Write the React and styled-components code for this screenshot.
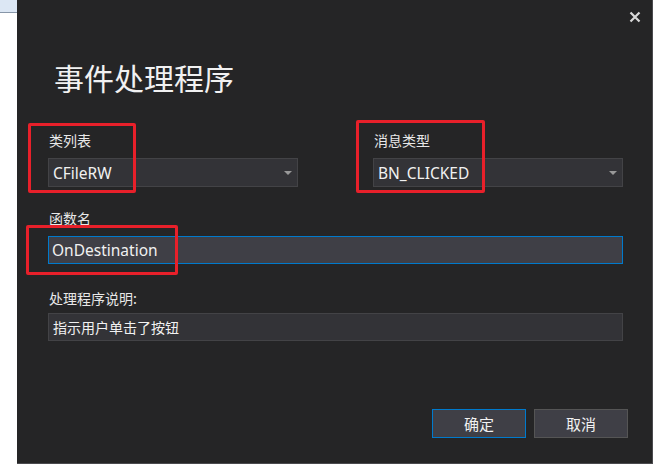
import React from "react";
import styled, { createGlobalStyle } from "styled-components";

const Global = createGlobalStyle`
  html, body { margin: 0; padding: 0; background: #ffffff; }
  body { font-family: "Noto Sans", "Noto Sans CJK SC", sans-serif; }
`;

const Page = styled.div`
  display: flex;
  width: 653px;
  height: 471px;
  background: #ffffff;
  overflow: hidden;
`;

const SideStrip = styled.div`
  width: 17px;
  flex: none;
  display: flex;
  flex-direction: column;
`;

const SideBand = styled.div`
  height: 12px;
  background: #dce7f4;
  border-bottom: 1px solid #8796a8;
`;

const Dialog = styled.div`
  position: relative;
  flex: 1;
  background: #252526;
  border-right: 1px solid #4a4a4e;
  border-bottom: 1px solid #4a4a4e;
  display: flex;
  flex-direction: column;
  padding: 0 29px 25px 31px;
  box-sizing: border-box;
  height: 464px;
  color: #f1f1f1;
  font-family: "Noto Sans", "Noto Sans CJK SC", sans-serif;
`;

const Header = styled.div`
  display: flex;
  justify-content: flex-end;
  height: 34px;
  margin-right: -18px;
  padding-top: 11px;
  box-sizing: border-box;
`;

const CloseButton = styled.button`
  width: 12px;
  height: 12px;
  padding: 0;
  border: none;
  background: transparent;
  display: flex;
  align-items: center;
  justify-content: center;
  svg { display: block; }
`;

const Title = styled.h1`
  margin: 23px 0 0 6px;
  font-family: "Noto Sans CJK SC", sans-serif;
  font-weight: 400;
  font-size: 30px;
  line-height: 40px;
  color: #f1f1f1;
`;

const TwoCols = styled.div`
  display: grid;
  grid-template-columns: 250px 250px;
  justify-content: space-between;
  margin-top: 33px;
`;

const Field = styled.div`
  display: flex;
  flex-direction: column;
  margin-top: ${(p) => p.$top || 0}px;
`;

const Label = styled.label`
  font-family: "Noto Sans CJK SC", sans-serif;
  font-size: 14px;
  line-height: 20px;
  color: #e8e8e8;
  margin-bottom: ${(p) => p.$gap || 8}px;
  margin-left: 1px;
`;

const Combo = styled.div`
  height: 29px;
  box-sizing: border-box;
  background: #333337;
  border: 1px solid #434346;
  display: flex;
  align-items: center;
  padding: 0 0 0 4px;
  font-size: 15.5px;
  color: #f1f1f1;
`;

const ComboText = styled.span`
  flex: 1;
`;

const Arrow = styled.span`
  width: 0;
  height: 0;
  border-left: 4px solid transparent;
  border-right: 4px solid transparent;
  border-top: 4px solid #999999;
  margin-right: 5px;
  margin-top: 1px;
`;

const TextInput = styled.div`
  height: 28px;
  box-sizing: border-box;
  background: ${(p) => (p.$focused ? "#3f3f46" : "#333337")};
  border: 1px solid ${(p) => (p.$focused ? "#007acc" : "#434346")};
  display: flex;
  align-items: center;
  padding-left: ${(p) => (p.$focused ? 3 : 4)}px;
  font-size: ${(p) => (p.$cjk ? 14 : 15.5)}px;
  font-family: ${(p) =>
    p.$cjk ? `"Noto Sans CJK SC", sans-serif` : `"Noto Sans", "Noto Sans CJK SC", sans-serif`};
  color: #f1f1f1;
`;

const Footer = styled.div`
  margin-top: auto;
  display: flex;
  justify-content: flex-end;
  gap: 8px;
  margin-right: -5px;
`;

const Button = styled.button`
  width: 94px;
  height: 29px;
  box-sizing: border-box;
  background: #3f3f46;
  border: 1px solid ${(p) => (p.$primary ? "#007acc" : "#555555")};
  color: #f1f1f1;
  font-family: "Noto Sans CJK SC", sans-serif;
  font-size: 15px;
  padding: 0;
`;

const Annotation = styled.div`
  position: absolute;
  border: 3px solid #e8202a;
  border-radius: 2px;
  box-sizing: border-box;
  pointer-events: none;
`;

export default function App() {
  return (
    <>
      <Global />
      <Page>
        <SideStrip>
          <SideBand />
        </SideStrip>
        <Dialog>
          <Header>
            <CloseButton aria-label="close">
              <svg width="12" height="12" viewBox="0 0 12 12">
                <path d="M1.5 1.5 L10.5 10.5 M10.5 1.5 L1.5 10.5" stroke="#d8d8d8" strokeWidth="2.2" />
              </svg>
            </CloseButton>
          </Header>
          <Title>事件处理程序</Title>
          <TwoCols>
            <Field>
              <Label>类列表</Label>
              <Combo>
                <ComboText>CFileRW</ComboText>
                <Arrow />
              </Combo>
            </Field>
            <Field>
              <Label>消息类型</Label>
              <Combo>
                <ComboText>BN_CLICKED</ComboText>
                <Arrow />
              </Combo>
            </Field>
          </TwoCols>
          <Field $top={21}>
            <Label $gap={8}>函数名</Label>
            <TextInput $focused>OnDestination</TextInput>
          </Field>
          <Field $top={24}>
            <Label $gap={5}>处理程序说明:</Label>
            <TextInput $cjk>指示用户单击了按钮</TextInput>
          </Field>
          <Footer>
            <Button $primary>确定</Button>
            <Button>取消</Button>
          </Footer>
          <Annotation style={{ left: 11, top: 123, width: 108, height: 70 }} />
          <Annotation style={{ left: 339, top: 120, width: 129, height: 73 }} />
          <Annotation style={{ left: 9, top: 225, width: 152, height: 50 }} />
        </Dialog>
      </Page>
    </>
  );
}
